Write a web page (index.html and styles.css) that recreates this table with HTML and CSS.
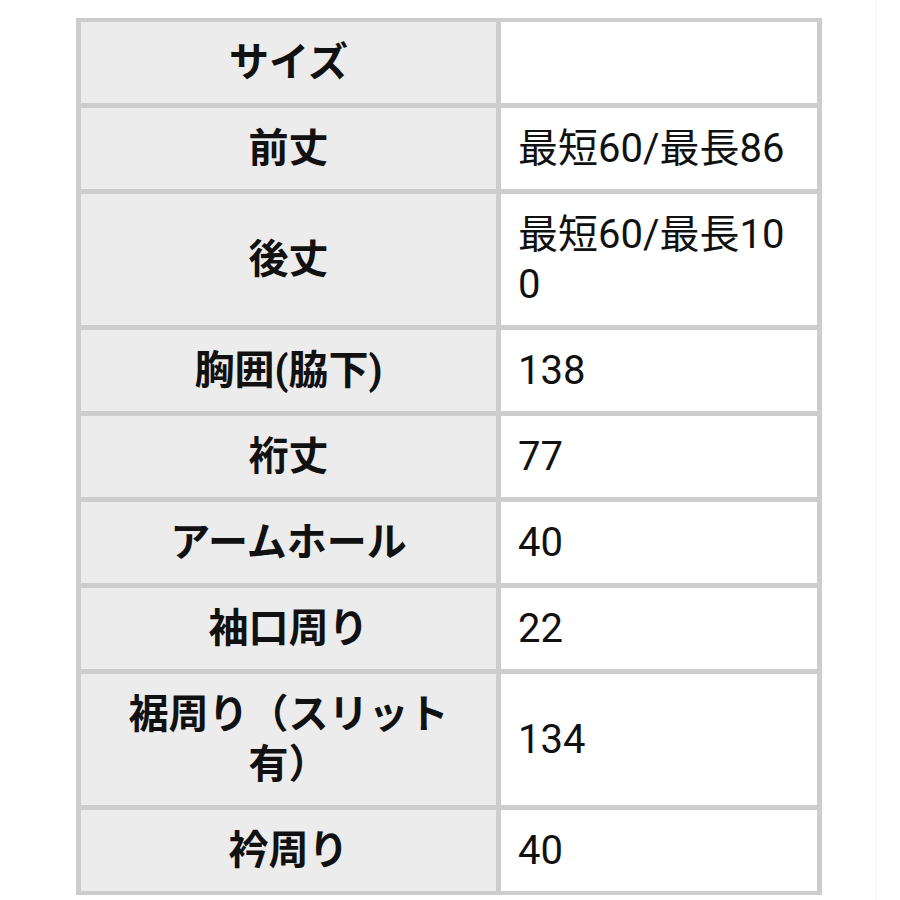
FILE: index.html
```html
<!DOCTYPE html>
<html lang="ja">
<head>
<meta charset="utf-8">
<link rel="stylesheet" href="styles.css">
</head>
<body>
<div class="page">
  <div class="spec">
    <div class="k">サイズ</div><div class="v"></div>
    <div class="k">前丈</div><div class="v">最短60/最長86</div>
    <div class="k">後丈</div><div class="v">最短60/最長100</div>
    <div class="k">胸囲(脇下)</div><div class="v">138</div>
    <div class="k">裄丈</div><div class="v">77</div>
    <div class="k">アームホール</div><div class="v">40</div>
    <div class="k">袖口周り</div><div class="v">22</div>
    <div class="k">裾周り（スリット有）</div><div class="v">134</div>
    <div class="k">衿周り</div><div class="v">40</div>
  </div>
</div>
</body>
</html>
```
FILE: styles.css
```css
html, body {
  margin: 0;
  padding: 0;
  background: #ffffff;
}
.page {
  width: 876px;
  height: 900px;
  border-right: 1px solid #f4f4f4;
  padding-top: 18px;
  padding-left: 76px;
  box-sizing: border-box;
  overflow: hidden;
}
.spec {
  display: grid;
  grid-template-columns: 415px 316px;
  gap: 5px;
  padding: 4px 5px;
  width: max-content;
  background: #cdcdcd;
  font-family: Roboto, "Noto Sans CJK JP", sans-serif;
  font-size: 40px;
  line-height: 50px;
  color: #111111;
}
.k, .v {
  padding: 16px 17px 15px;
  min-height: 50px;
}
.k {
  background: #ececec;
  font-weight: 700;
  text-align: center;
  display: flex;
  align-items: center;
  justify-content: center;
  padding-left: 40px;
  padding-right: 40px;
}
.v {
  background: #ffffff;
  word-break: break-all;
  display: flex;
  align-items: center;
}
```
